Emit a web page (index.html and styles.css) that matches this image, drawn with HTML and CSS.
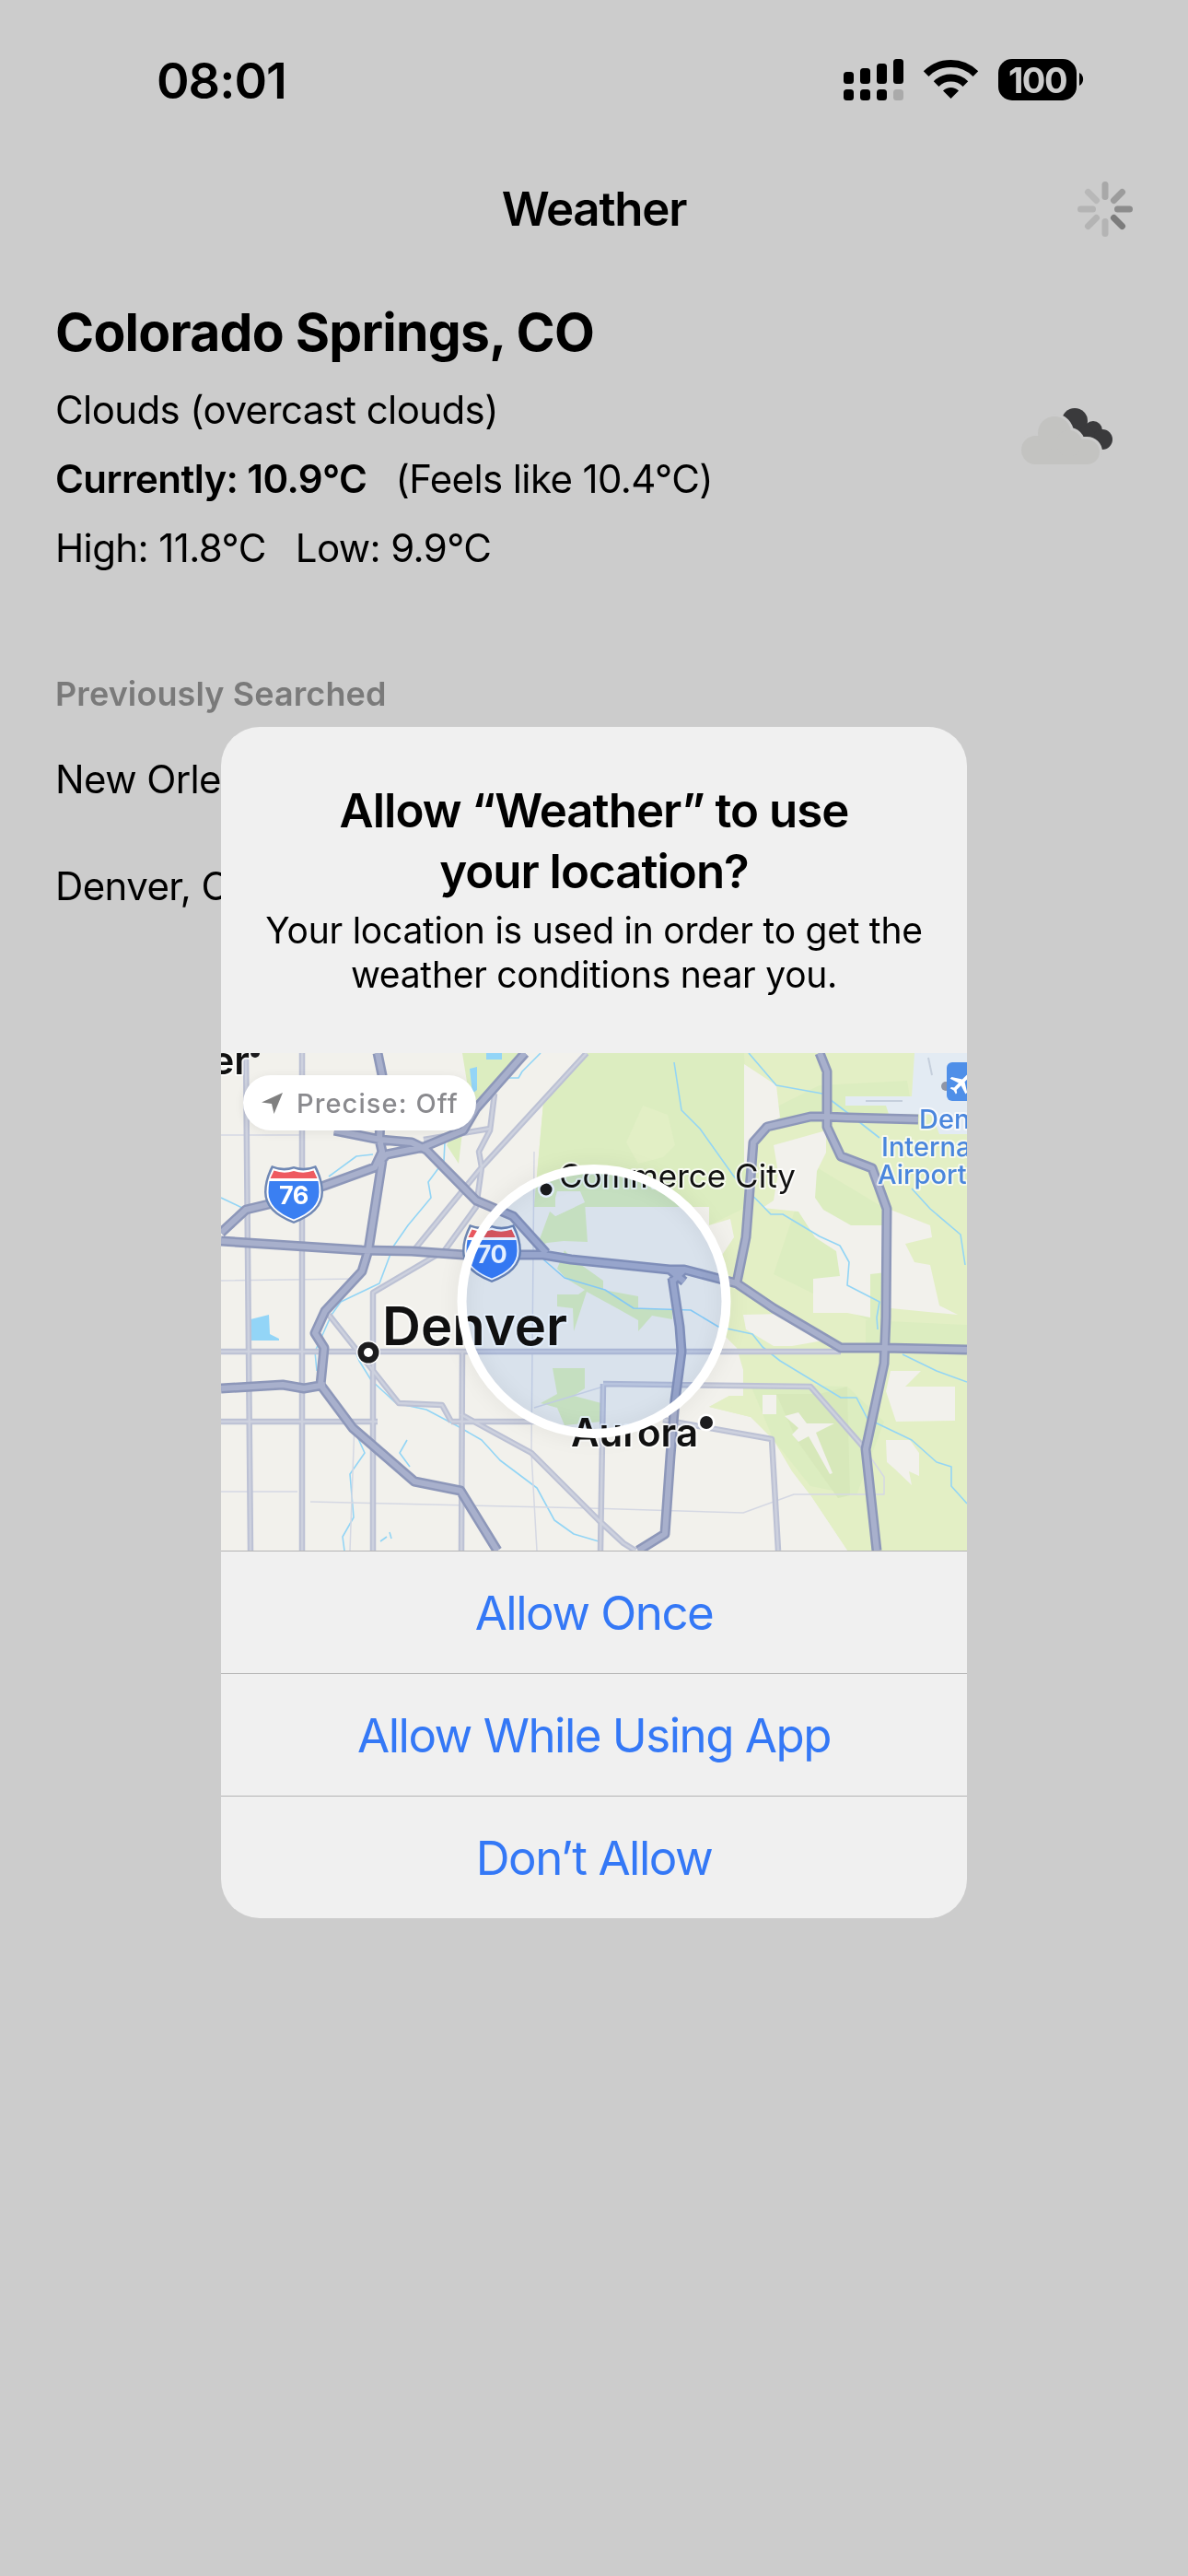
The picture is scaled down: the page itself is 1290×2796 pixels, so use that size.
FILE: index.html
```html
<!DOCTYPE html>
<html lang="en">
<head>
<meta charset="utf-8">
<title>Weather</title>
<link rel="stylesheet" href="styles.css">
</head>
<body>
<div class="page">
  <header class="status">
    <div class="time">08:01</div>
    <svg class="status-icons" width="262" height="45" viewBox="0 0 262 45">
      <rect x="0" y="14" width="11" height="13" rx="3.5"/><rect x="18" y="10" width="11" height="17" rx="3.5"/><rect x="36" y="5" width="11" height="22" rx="3.5"/><rect x="54" y="0" width="11" height="27" rx="3.5"/>
      <rect x="0" y="33" width="11" height="12" rx="3.5"/><rect x="18" y="33" width="11" height="12" rx="3.5"/><rect x="36" y="33" width="11" height="12" rx="3.5"/><rect class="dim" x="54" y="33" width="11" height="12" rx="3.5"/>
      <path class="wifi" d="M89.6 16.1A38 38 0 0 1 143.4 16.1"/><path class="wifi" d="M100.6 27.1A22.5 22.5 0 0 1 132.4 27.1"/><path d="M116.5 43L108 34.5A12 12 0 0 1 125 34.5Z"/>
      <rect x="168" y="0" width="85" height="45" rx="15"/><path d="M256 15A8 8 0 0 1 256 29Z"/>
      <text class="batt" x="210.5" y="37" text-anchor="middle">100</text>
    </svg>
  </header>

  <nav class="nav">
    <span></span>
    <h1 class="nav-title">Weather</h1>
    <svg class="spinner" width="60" height="60" viewBox="-30 -30 60 60">
      <line class="sp s1" x1="0" y1="-13.5" x2="0" y2="-26.5"/>
      <line class="sp s2" x1="9.5" y1="-9.5" x2="18.5" y2="-18.5"/>
      <line class="sp s3" x1="13.5" y1="0" x2="26.5" y2="0"/>
      <line class="sp s4" x1="9.5" y1="9.5" x2="18.5" y2="18.5"/>
      <line class="sp s5" x1="0" y1="13.5" x2="0" y2="26.5"/>
      <line class="sp s5" x1="-9.5" y1="9.5" x2="-18.5" y2="18.5"/>
      <line class="sp s5" x1="-13.5" y1="0" x2="-26.5" y2="0"/>
      <line class="sp s6" x1="-9.5" y1="-9.5" x2="-18.5" y2="-18.5"/>
    </svg>
  </nav>

  <main class="main">
    <section class="current">
      <div class="current-text">
        <h2 class="city">Colorado Springs, CO</h2>
        <p class="row">Clouds (overcast clouds)</p>
        <p class="row"><strong class="strong">Currently: 10.9°C</strong><span class="gap">(Feels like 10.4°C)</span></p>
        <p class="row">High: 11.8°C<span class="gap-sm">Low: 9.9°C</span></p>
      </div>
      <svg class="cloud" width="99" height="61" viewBox="0 0 99 61">
        <g class="cloud-dark"><circle cx="58" cy="14" r="14"/><circle cx="78" cy="24" r="10"/><circle cx="88" cy="34" r="11"/><circle cx="70" cy="30" r="10"/></g>
        <g class="cloud-gap"><rect x="0" y="30" width="60" height="31" rx="15.5"/><rect x="30" y="34" width="55" height="27" rx="13.5"/><circle cx="36" cy="27" r="18"/><circle cx="52" cy="38" r="14"/></g>
        <g class="cloud-light"><rect x="0" y="30" width="60" height="31" rx="15.5"/><rect x="30" y="34" width="55" height="27" rx="13.5"/><circle cx="36" cy="27" r="18"/><circle cx="52" cy="38" r="14"/></g>
      </svg>
    </section>
    <h3 class="recent">Previously Searched</h3>
    <p class="row place">New Orleans, LA</p>
    <p class="row place place-next">Denver, CO</p>
  </main>

  <div class="dialog" role="dialog">
    <div class="dialog-head">
      <h2 class="dialog-title">Allow “Weather” to use<br>your location?</h2>
      <p class="dialog-msg">Your location is used in order to get the<br>weather conditions near you.</p>
    </div>
    <div class="map">
      <svg class="map-svg" width="810" height="540" viewBox="0 0 810 540">
        <defs>
          <path id="hw" d="M0 195L27 170L52 164L112 144L167 124L175 107L172 94L175 24L170 0M330 0L277 60L263 84L220 102L180 110L170 120M123 84L173 94L207 97L223 105L277 160L317 177L353 217M175 117L160 214L153 237L113 280L102 304L112 320L108 360L143 407L210 465L260 475L300 540M0 204L153 214L207 215L263 219L350 219L380 224L487 235L503 235L560 250L600 277L673 320L720 320L810 322M0 364L67 360L90 364L113 360M560 249L570 200L578 97L593 80L640 69L657 69L680 70L757 72M650 0L658 20L658 80L673 112L707 125L723 169L722 287L720 337L700 430L712 540M490 244L498 297L500 324L493 377L488 437L482 522L453 540M487 235L503 248M503 235L490 248"/>
          <path id="rd" d="M0 324L673 324M27 0L32 540M88 0L88 540M165 290L165 540M262 325L261 540M0 400L170 400M250 400L350 400M117 284L193 380L240 382L250 400M260 392L337 434L410 507L437 532L450 540M397 0L283 124L277 167L243 214L165 260L165 290M297 44L292 84L280 107L283 124M220 94L292 82M207 217L283 124M415 359L640 362L697 427M415 359L412 540M480 398L598 419L605 540"/>
          <path id="thin" d="M0 476L83 476M97 487L400 494L567 499L622 479L720 479L720 460L697 427M337 434L343 540M340 107L337 434M0 89L88 89M0 247L150 245M145 400L140 540M340 385L415 362"/>
          <path id="water" d="M0 157L25 169M117 134L147 112L165 110M263 87L243 97L242 117L225 140L228 157L203 187L187 210L172 250L130 270L120 284L102 324L104 345M120 284L140 310L150 334L163 355L190 380L223 387L257 405L283 420L303 442L343 472L362 507L383 522L410 530M147 414L156 434L140 457L144 504L132 525L134 540M202 420L194 434L205 449M173 530L180 525M183 520L185 527M347 0L327 20L323 27L313 27M492 10L500 62L520 82L557 134L597 175L610 175L650 199L672 209L682 227L680 252L715 270L712 287L713 300M573 0L603 35L653 44L683 67L715 92M750 147L770 169L803 197L808 230M350 224L373 244L417 257L448 277L510 279L540 297L577 305L588 319L607 334L673 374L690 374L702 397L750 420L777 444L793 449L793 470L810 489M740 327L777 345L810 357"/>
        </defs>
        <rect class="base" width="810" height="540"/>
        <polygon class="g-light" points="350,54 397,0 810,0 810,540 680,540 640,480 530,384 340,380 340,167"/>
        <polygon class="g-mid" points="350,54 397,0 568,0 575,165 530,187 340,167"/>
        <polygon class="g-mid" points="262,0 330,0 320,18 292,40 265,60 258,120 245,100 270,50"/>
        <polygon class="g-mid" points="600,60 650,35 745,30 750,60 700,70 600,80"/>
        <polygon class="g-mid" points="640,120 723,170 723,300 600,240"/>
        <polygon class="g-mid" points="575,360 603,360 680,362 720,400 690,480 640,470 600,420"/>
        <polygon class="g-mid" points="700,290 810,295 810,320 700,320"/>
        <polygon class="g-soft" points="440,97 458,57 485,67 493,100 480,113 453,120"/>
        <polygon class="base" points="340,167 530,167 530,187 553,180 557,200 538,228 552,262 552,290 545,305 560,320 567,344 567,372 552,372 530,384 575,395 600,420 620,454 640,480 680,540 340,540"/>
        <polygon class="base" points="568,12 603,35 607,70 593,77 578,97 572,120 568,120"/>
        <polygon class="base" points="600,100 657,84 657,108 647,128 645,157 654,170 684,187 722,187 722,238 705,240 705,287 680,282 643,282 643,245 672,242 668,215 645,200 627,172 588,168 600,160 605,130"/>
        <polygon class="base" points="727,170 770,187 772,200 743,207 753,227 770,230 780,274 800,284 727,277"/>
        <polygon class="base" points="567,284 610,283 640,295 665,310 620,318 600,318 570,300"/>
        <polygon class="base" points="727,345 760,345 743,362 797,362 797,399 733,400 722,367"/>
        <polygon class="base" points="722,420 748,420 758,434 758,459 747,454 750,469 730,450 723,444"/>
        <polygon class="g-deep" points="603,370 650,370 680,362 683,480 670,483 625,420"/>
        <polygon class="base" points="612,394 627,390 636,402 666,402 646,412 664,456 661,457 638,416 627,422 620,414 627,407"/>
        <polygon class="base" points="588,371 603,371 603,392 588,392"/>
        <polygon class="g-light" points="530,384 552,372 555,385 577,385 575,395"/>
        <polygon class="g-mid" points="343,210 357,172 363,177 395,162 398,205 372,204 354,206"/>
        <polygon class="g-mid" points="365,234 373,214 380,222 415,247 415,257 453,264 453,277 490,279 490,289 468,285 453,302 453,290 430,277 397,259 383,302 382,277 365,275 365,262 388,262 395,257 375,245"/>
        <polygon class="g-mid" points="360,342 395,342 395,364 383,372 413,380 413,400 373,404 365,385 347,380 365,370"/>
        <polygon class="base" points="363,157 363,177 395,162 390,150 365,150"/>
        <polygon class="air" points="753,0 810,0 810,88 780,88 772,67 725,66 722,57 678,57 678,47 750,47"/>
        <path class="air-line" d="M700 52H740M768 5L772 24"/>
        <polygon class="lake" points="32,289 52,284 53,305 63,310 63,312 32,312"/>
        <polygon class="lake" points="270,17 278,15 278,40 273,44"/>
        <polygon class="lake" points="288,0 305,0 305,7 288,7"/>
        <use href="#water" class="water"/>
        <use href="#thin" class="thin"/>
        <use href="#rd" class="rd-o"/><use href="#rd" class="rd-i"/>
        <use href="#hw" class="hw-o"/><use href="#hw" class="hw-i"/>
        <circle class="ink" cx="37" cy="0" r="5"/>
        <text class="lbl lbl-er" x="31" y="23" text-anchor="end">er</text>
        <text class="lbl lbl-denver" x="175" y="317">Denver</text>
        <text class="lbl lbl-comm" x="367" y="146">Commerce City</text>
        <text class="lbl lbl-aurora" x="380" y="427">Aurora</text>
        <circle class="halo" cx="353" cy="148" r="9"/><circle class="ink" cx="353" cy="148" r="6.5"/>
        <circle class="halo" cx="527" cy="401" r="9.5"/><circle class="ink" cx="527" cy="401" r="7"/>
        <circle class="halo" cx="160" cy="325" r="13"/><circle class="ink" cx="160" cy="325" r="11.5"/><circle class="halo" cx="160" cy="325" r="5"/>
        <text class="lbl-air" x="758" y="82">Denver</text>
        <text class="lbl-air" x="717" y="112">International</text>
        <text class="lbl-air" x="713" y="142">Airport</text>
        <circle class="air-dot" cx="787" cy="36" r="5"/>
        <rect class="air-pin" x="788" y="10" width="40" height="42" rx="6"/>
        <path class="plane" transform="translate(804 33) rotate(45) scale(1.25) translate(-12 -12)" d="M21 16v-2l-8-5V3.5c0-.83-.67-1.5-1.5-1.5S10 2.67 10 3.5V9l-8 5v2l8-2.5V19l-2 1.5V22l3.5-1 3.5 1v-1.5L13 19v-5.5l8 2.5z"/>
        <g transform="translate(47 121)">
          <path class="sh-o" d="M8 1Q20 6 32 2Q44 6 56 1Q64 16 64 30Q64 52 32 64Q0 52 0 30Q0 16 8 1Z"/>
          <path class="sh-w" d="M9.5 4Q21 8.5 32 4.5Q43 8.5 54.5 4Q61.5 17 61.5 30Q61.5 50 32 61.5Q2.5 50 2.5 30Q2.5 17 9.5 4Z"/>
          <path class="sh-r" d="M10.5 6.5Q21 10.5 32 7Q43 10.5 53.5 6.5L57.5 15H6.5Z"/>
          <path class="sh-b" d="M5.5 18H58.5Q59.5 24 59.5 30Q59.5 49 32 59.5Q4.5 49 4.5 30Q4.5 24 5.5 18Z"/>
          <text class="sh-t" x="32" y="43" text-anchor="middle">76</text>
        </g>
        <g transform="translate(262 185)">
          <path class="sh-o" d="M8 1Q20 6 32 2Q44 6 56 1Q64 16 64 30Q64 52 32 64Q0 52 0 30Q0 16 8 1Z"/>
          <path class="sh-w" d="M9.5 4Q21 8.5 32 4.5Q43 8.5 54.5 4Q61.5 17 61.5 30Q61.5 50 32 61.5Q2.5 50 2.5 30Q2.5 17 9.5 4Z"/>
          <path class="sh-r" d="M10.5 6.5Q21 10.5 32 7Q43 10.5 53.5 6.5L57.5 15H6.5Z"/>
          <path class="sh-b" d="M5.5 18H58.5Q59.5 24 59.5 30Q59.5 49 32 59.5Q4.5 49 4.5 30Q4.5 24 5.5 18Z"/>
          <text class="sh-t" x="32" y="43" text-anchor="middle">70</text>
        </g>
        <circle class="zone" cx="405" cy="269.5" r="144"/>
        <circle class="zone-ring" cx="405" cy="269.5" r="143.5"/>
      </svg>
      <div class="precise">
        <svg class="precise-arrow" width="23" height="23" viewBox="0 0 23 23"><path d="M23 0L0 10.5L11 12L13.5 23Z"/></svg>
        <span>Precise: Off</span>
      </div>
    </div>
    <button class="action">Allow Once</button>
    <button class="action">Allow While Using App</button>
    <button class="action">Don’t Allow</button>
  </div>
</div>
</body>
</html>
```
FILE: styles.css
```css
* { box-sizing: border-box; }
html, body { margin: 0; padding: 0; }
body { background: #ccc; color: #000; font-family: Inter, "Noto Sans", sans-serif; }
.page { position: relative; width: 1290px; height: 2796px; overflow: hidden; background: #ccc; }
h1, h2, h3, p { margin: 0; font-weight: 400; }

.status { height: 197px; display: flex; justify-content: space-between; align-items: flex-start; padding: 58px 112px 0 170px; }
.time { font-size: 54px; line-height: 60px; font-weight: 600; letter-spacing: -1px; }
.status-icons { margin-top: 6px; }
.dim { fill: #aaa; }
.wifi { fill: none; stroke: #000; stroke-width: 8; }
.batt { font-size: 38px; font-weight: 700; fill: #ccc; letter-spacing: -1.5px; font-family: Inter, sans-serif; }

.nav { height: 60px; display: grid; grid-template-columns: 1fr auto 1fr; align-items: center; }
.nav-title { font-size: 51px; line-height: 60px; font-weight: 600; letter-spacing: -1.2px; }
.spinner { justify-self: end; margin-right: 60px; }
.sp { stroke-width: 7; stroke-linecap: round; }
.s1 { stroke: #a8a8a8; } .s2 { stroke: #9c9c9c; } .s3 { stroke: #8c8c8c; } .s4 { stroke: #7c7c7c; } .s5 { stroke: #b4b4b4; } .s6 { stroke: #b8b8b8; }

.main { padding: 66px 82px 0 60px; }
.current { display: flex; justify-content: space-between; align-items: flex-start; }
.city { font-size: 57px; line-height: 75px; font-weight: 700; letter-spacing: -0.75px; margin-bottom: 9px; }
.row { font-size: 42px; line-height: 75px; letter-spacing: -0.6px; white-space: nowrap; }
.strong { font-weight: 600; }
.gap { margin-left: 31px; }
.gap-sm { margin-left: 32px; }
.cloud { margin-top: 120px; }
.cloud-dark { fill: #3a3a3c; }
.cloud-gap { fill: #ccc; stroke: #ccc; stroke-width: 6; }
.cloud-light { fill: #c3c3c1; }
.recent { margin-top: 96px; font-size: 36px; line-height: 50px; font-weight: 600; color: #7a7a7a; letter-spacing: 0.1px; }
.place { margin-top: 30px; }
.place-next { margin-top: 41px; }

.dialog { position: absolute; top: 789px; left: 240px; width: 810px; height: 1293px; background: #f0f0f0; border-radius: 42px; overflow: hidden; display: flex; flex-direction: column; }
.dialog-head { text-align: center; padding: 58px 0 61px; }
.dialog-title { font-size: 51px; line-height: 66px; font-weight: 600; letter-spacing: -1px; margin-bottom: 7px; }
.dialog-msg { font-size: 39px; line-height: 48px; letter-spacing: -0.25px; }

.map { position: relative; height: 540px; overflow: hidden; }
.map-svg { display: block; }
.base { fill: #f2f1ec; }
.g-light { fill: #e3efc5; }
.g-mid { fill: #dcedc0; }
.g-deep { fill: #d7e8ba; }
.g-soft { fill: #e2efc5; }
.air { fill: #e3ebf3; }
.air-line { fill: none; stroke: #c5cfdc; stroke-width: 2; }
.lake { fill: #93d5f7; }
use { fill: none; stroke-linejoin: round; }
.water { stroke: #93d5f5; stroke-width: 1.6; }
.thin { stroke: #d5d8e3; stroke-width: 1.5; }
.rd-o { stroke: #bcc1d4; stroke-width: 6.5; }
.rd-i { stroke: #cdd1de; stroke-width: 2.5; }
.hw-o { stroke: #8d97b9; stroke-width: 11; }
.hw-i { stroke: #a8b0cc; stroke-width: 6; }
.ink { fill: #1c1c1e; }
.halo { fill: #fff; }
.lbl { fill: #111; paint-order: stroke; stroke: rgba(255,255,255,.75); stroke-width: 4px; stroke-linejoin: round; font-family: Inter, sans-serif; }
.lbl-er { font-size: 42px; font-weight: 600; }
.lbl-denver { font-size: 58px; font-weight: 600; }
.lbl-comm { font-size: 35px; font-weight: 400; }
.lbl-aurora { font-size: 42px; font-weight: 600; }
.lbl-air { fill: #4a86dd; font-size: 29px; font-weight: 500; paint-order: stroke; stroke: rgba(255,255,255,.7); stroke-width: 4px; stroke-linejoin: round; }
.air-dot { fill: #8f95a5; }
.air-pin { fill: #4f8fe8; }
.plane { fill: #fff; }
.sh-o { fill: #7088b4; }
.sh-w { fill: #fff; }
.sh-r { fill: #ee5a60; }
.sh-b { fill: #3a7ff2; }
.sh-t { fill: #fff; font-size: 27px; font-weight: 700; font-family: Inter, sans-serif; letter-spacing: -0.5px; }
.zone { fill: #e5f0ff; mix-blend-mode: multiply; }
.zone-ring { fill: none; stroke: #fff; stroke-width: 10; filter: drop-shadow(0 0 10px rgba(0,0,0,.08)); }

.precise { position: absolute; top: 24px; left: 24px; width: 253px; height: 60px; border-radius: 30px; background: #fff; box-shadow: 0 2px 12px rgba(0,0,0,.07); display: flex; align-items: center; padding-left: 20px; gap: 15px; color: #8a8a8e; font-size: 29px; font-weight: 500; letter-spacing: 1.1px; }
.precise-arrow { fill: #808080; }

.action { flex: 1; border: 0; border-top: 1.5px solid #b4b4b4; background: transparent; color: #3478f6; font: 400 51px Inter, sans-serif; letter-spacing: -1.5px; padding: 0; text-align: center; }
```
